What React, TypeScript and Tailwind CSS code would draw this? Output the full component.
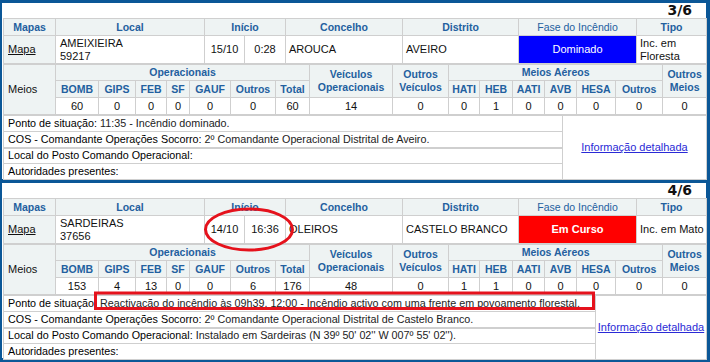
import React from "react";

type Panel = {
  idx: string;
  local: [string, string];
  date: string;
  time: string;
  concelho: string;
  distrito: string;
  fase: string;
  faseBg: string;
  faseBold: boolean;
  tipo: React.ReactNode;
  ops: string[];
  veic: string;
  outrosVeic: string;
  aereos: string[];
  outrosMeios: string;
  ponto: string;
  cos: string;
  posto: string;
  leftW: number;
  rightW: number;
};

const panels: Panel[] = [
  {
    idx: "3/6",
    local: ["AMEIXIEIRA", "59217"],
    date: "15/10",
    time: "0:28",
    concelho: "AROUCA",
    distrito: "AVEIRO",
    fase: "Dominado",
    faseBg: "bg-[#0000ff]",
    faseBold: false,
    tipo: (
      <>
        Inc. em
        <br />
        Floresta
      </>
    ),
    ops: ["60", "0", "0", "0", "0", "0", "60"],
    veic: "14",
    outrosVeic: "0",
    aereos: ["0", "1", "0", "0", "0", "0"],
    outrosMeios: "0",
    ponto: "11:35 - Incêndio dominado.",
    cos: "2º Comandante Operacional Distrital de Aveiro.",
    posto: "",
    leftW: 559,
    rightW: 144,
  },
  {
    idx: "4/6",
    local: ["SARDEIRAS", "37656"],
    date: "14/10",
    time: "16:36",
    concelho: "OLEIROS",
    distrito: "CASTELO BRANCO",
    fase: "Em Curso",
    faseBg: "bg-[#ff0000]",
    faseBold: true,
    tipo: "Inc. em Mato",
    ops: ["153", "4", "13", "0", "0", "6", "176"],
    veic: "48",
    outrosVeic: "0",
    aereos: ["1", "1", "0", "0", "0", "0"],
    outrosMeios: "0",
    ponto:
      "Reactivação do incêndio às 09h39. 12:00 - Incêndio activo com uma frente em povoamento florestal.",
    cos: "2º Comandante Operacional Distrital de Castelo Branco.",
    posto: "Instalado em Sardeiras (N 39º 50' 02'' W 007º 55' 02'').",
    leftW: 592,
    rightW: 111,
  },
];

const B = "border border-[#cfcfcf]";
const TH = `${B} bg-[#eef3f3] text-[#23609f] font-bold text-[10.5px] leading-[13px] text-center p-0`;
const TD = `${B} bg-white text-[11px] leading-[13px] text-[#111] p-0`;
const TI = `${B} bg-white text-[10.75px] leading-[13px] text-[#111] p-0`;

const colsA = [52, 149, 40, 41, 117, 116, 118, 70];
const colsB = [52, 43, 37, 31, 23, 41, 45, 34, 83, 56, 31, 33, 32, 32, 39, 47, 44];

function PanelView({ p, h }: { p: Panel; h: number }) {
  return (
    <div className="bg-white pl-[1px] flex flex-col" style={{ height: h }}>
      <div
        className="h-[15px] shrink-0 text-right pr-[14px] text-[14px] leading-[15px] font-bold text-[#111]"
        style={{ fontFamily: '"DejaVu Sans", Verdana, sans-serif' }}
      >
        {p.idx}
      </div>
      <table className="table-fixed border-collapse w-[703px]">
        <colgroup>
          {colsA.map((w, i) => (
            <col key={i} style={{ width: w }} />
          ))}
        </colgroup>
        <tbody>
          <tr className="h-[17px]">
            <th className={TH}>Mapas</th>
            <th className={TH}>Local</th>
            <th className={TH} colSpan={2}>
              Início
            </th>
            <th className={TH}>Concelho</th>
            <th className={TH}>Distrito</th>
            <th className={`${TH} font-normal`}>Fase do Incêndio</th>
            <th className={TH}>Tipo</th>
          </tr>
          <tr className="h-[28px]">
            <td className={`${B} bg-[#eef3f3] text-[11px] leading-[13px] pl-[4px]`}>
              <span className="underline text-[#111]">Mapa</span>
            </td>
            <td className={`${TD} pl-[4px]`}>
              {p.local[0]}
              <br />
              {p.local[1]}
            </td>
            <td className={`${TD} text-center`}>{p.date}</td>
            <td className={`${TD} text-center`}>{p.time}</td>
            <td className={`${TD} pl-[3px]`}>{p.concelho}</td>
            <td className={`${TD} pl-[3px]`}>{p.distrito}</td>
            <td
              className={`${B} ${p.faseBg} text-white text-center text-[11px] leading-[13px] ${
                p.faseBold ? "font-bold" : ""
              }`}
            >
              {p.fase}
            </td>
            <td className={`${TD} pl-[3px]`}>{p.tipo}</td>
          </tr>
        </tbody>
      </table>
      <table className="table-fixed border-collapse w-[703px] mt-0">
        <colgroup>
          {colsB.map((w, i) => (
            <col key={i} style={{ width: w }} />
          ))}
        </colgroup>
        <tbody>
          <tr className="h-[16px]">
            <td rowSpan={3} className={`${B} bg-[#eef3f3] text-[11px] leading-[13px] pl-[4px] text-[#111]`}>
              Meios
            </td>
            <th className={TH} colSpan={7}>
              Operacionais
            </th>
            <th className={TH} rowSpan={2}>
              Veículos
              <br />
              Operacionais
            </th>
            <th className={TH} rowSpan={2}>
              Outros
              <br />
              Veículos
            </th>
            <th className={TH} colSpan={6}>
              Meios Aéreos
            </th>
            <th className={TH} rowSpan={2}>
              Outros
              <br />
              Meios
            </th>
          </tr>
          <tr className="h-[17px]">
            {["BOMB", "GIPS", "FEB", "SF", "GAUF", "Outros", "Total"].map((t) => (
              <th key={t} className={TH}>
                {t}
              </th>
            ))}
            {["HATI", "HEB", "AATI", "AVB", "HESA", "Outros"].map((t) => (
              <th key={t} className={TH}>
                {t}
              </th>
            ))}
          </tr>
          <tr className="h-[17px]">
            {p.ops.map((v, i) => (
              <td key={i} className={`${TD} text-center`}>
                {v}
              </td>
            ))}
            <td className={`${TD} text-center`}>{p.veic}</td>
            <td className={`${TD} text-center`}>{p.outrosVeic}</td>
            {p.aereos.map((v, i) => (
              <td key={i} className={`${TD} text-center`}>
                {v}
              </td>
            ))}
            <td className={`${TD} text-center`}>{p.outrosMeios}</td>
          </tr>
        </tbody>
      </table>
      <table className="table-fixed border-collapse w-[703px]">
        <colgroup>
          <col style={{ width: p.leftW }} />
          <col style={{ width: p.rightW }} />
        </colgroup>
        <tbody>
          <tr className="h-[16px]">
            <td className={`${TI} pl-[4px] whitespace-nowrap`}>
              <span className="text-black">Ponto de situação:</span>{" "}
              <span className="text-[#222]">{p.ponto}</span>
            </td>
            <td rowSpan={4} className={`${TD} text-center`}>
              <span className="underline text-[#2a2ad6]">Informação detalhada</span>
            </td>
          </tr>
          <tr className="h-[16px]">
            <td className={`${TI} pl-[4px] whitespace-nowrap`}>
              <span className="text-black">COS - Comandante Operações Socorro:</span>{" "}
              <span className="text-[#222]">{p.cos}</span>
            </td>
          </tr>
          <tr className="h-[16px]">
            <td className={`${TI} pl-[4px] whitespace-nowrap border-t-2`}>
              <span className="text-black">Local do Posto Comando Operacional:</span>{" "}
              <span className="text-[#222]">{p.posto}</span>
            </td>
          </tr>
          <tr className="h-[16px]">
            <td className={`${TI} pl-[4px] whitespace-nowrap`}>
              <span className="text-black">Autoridades presentes:</span>
            </td>
          </tr>
        </tbody>
      </table>
    </div>
  );
}

export default function App() {
  return (
    <div
      className="relative w-[710px] h-[362px] overflow-hidden bg-[#0b5797] pt-[3px] pl-[2px] pr-[4px] flex flex-col gap-[4px]"
      style={{ fontFamily: '"Liberation Sans", Arial, sans-serif' }}
    >
      <PanelView p={panels[0]} h={176} />
      <PanelView p={panels[1]} h={175} />
      <svg
        className="absolute left-0 top-0 pointer-events-none"
        width={710}
        height={362}
        viewBox="0 0 710 362"
      >
        <ellipse cx={249} cy={229.5} rx={43.5} ry={20.5} fill="none" stroke="#e5121c" strokeWidth={3} />
        <rect x={95.5} y={293} width={498} height={15.5} fill="none" stroke="#e5121c" strokeWidth={3} />
      </svg>
    </div>
  );
}
